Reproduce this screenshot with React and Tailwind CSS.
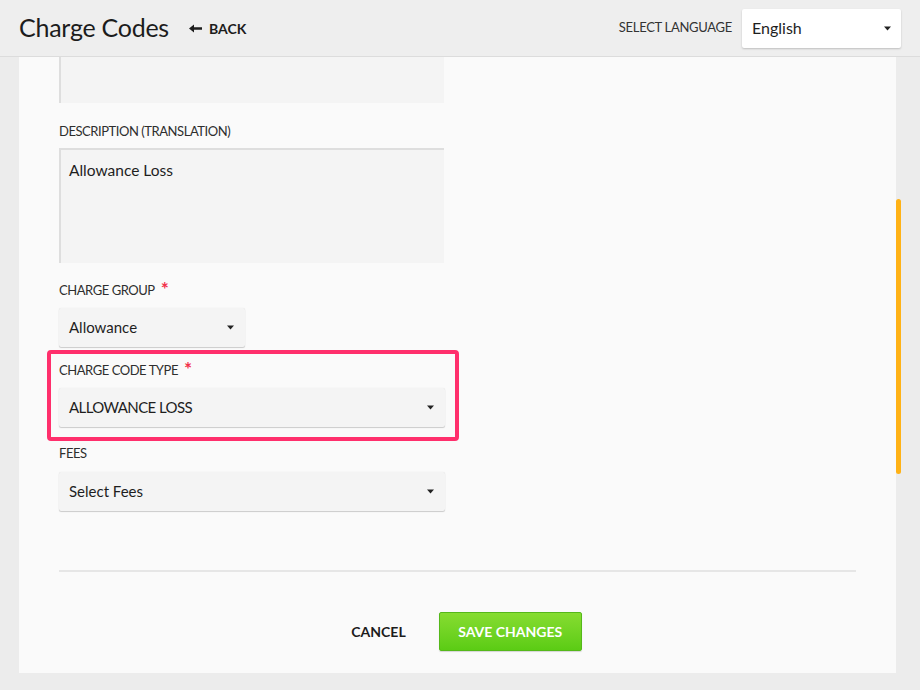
import React from "react";

const font = { fontFamily: '"Source Sans Pro", Lato, "Noto Sans", sans-serif' };

function Caret({ className = "" }) {
  return (
    <svg width="7" height="5" viewBox="0 0 7 5" className={className}>
      <path d="M0 0.5 L7 0.5 L3.5 4.5 Z" fill="#222" />
    </svg>
  );
}

function Select({ value, width = "w-[386px]", textClass = "" }) {
  return (
    <div
      className={`${width} h-[39px] bg-[#f4f4f4] rounded-[2px] shadow-[0_1px_1px_rgba(0,0,0,0.18),0_0_1px_rgba(0,0,0,0.12)] flex items-center justify-between pl-[10px] pr-[11px] text-[15px] text-[#1e1e1e]`}
    >
      <span className={textClass}>{value}</span>
      <Caret />
    </div>
  );
}

function Label({ children, required }) {
  return (
    <div className="text-[13px] leading-[18px] tracking-[-0.45px] text-[#2e2e2e] uppercase flex items-start">
      <span>{children}</span>
      {required && <span className="text-[#f2304a] ml-[6px] text-[19px] font-bold leading-[15px]">*</span>}
    </div>
  );
}

export default function App() {
  return (
    <div style={font} className="w-[920px] h-[690px] bg-[#ececec] flex flex-col overflow-hidden relative">
      <header className="h-[57px] shrink-0 bg-[#eeeeee] border-b border-[#dcdcdc] flex items-center pl-[19px] pr-[19px]">
        <h1 className="text-[25px] tracking-[-0.25px] text-[#1c1c1c] leading-none mt-[-2px]">Charge Codes</h1>
        <div className="ml-[20px] flex items-center gap-[7px] text-[14px] font-bold text-[#1c1c1c]">
          <svg width="13" height="9" viewBox="0 0 13 9">
            <path d="M0 4.5 L5 0.5 L5 3.2 L13 3.2 L13 5.8 L5 5.8 L5 8.5 Z" fill="#1c1c1c" />
          </svg>
          <span>BACK</span>
        </div>
        <div className="ml-auto flex items-center gap-[10px]">
          <span className="text-[13px] tracking-[-0.3px] text-[#333]">SELECT LANGUAGE</span>
          <div className="w-[159px] h-[39px] bg-white rounded-[2px] shadow-[0_1px_2px_rgba(0,0,0,0.2)] flex items-center justify-between pl-[10px] pr-[10px] text-[16px] text-[#1e1e1e]">
            <span>English</span>
            <Caret />
          </div>
        </div>
      </header>

      <main className="ml-[19px] w-[877px] h-[616px] bg-[#fafafa] relative pl-[40px] pr-[40px] flex flex-col">
        <div className="w-[385px] h-[46px] bg-[#f4f4f4] border-l-2 border-[#dedede]" />

        <div className="mt-[19px]">
          <Label>Description (Translation)</Label>
        </div>
        <div className="mt-[8px] w-[385px] h-[115px] bg-[#f4f4f4] border-l-2 border-t-2 border-[#dedede] pt-[9px] pl-[8px] text-[15.5px] text-[#1e1e1e]">
          Allowance Loss
        </div>

        <div className="mt-[18px]">
          <Label required>Charge Group</Label>
        </div>
        <div className="mt-[9px]">
          <Select value="Allowance" width="w-[186px]" />
        </div>

        <div className="mt-[14px]">
          <Label required>Charge Code Type</Label>
        </div>
        <div className="mt-[9px]">
          <Select value="ALLOWANCE LOSS" textClass="tracking-[-0.6px]" />
        </div>

        <div className="mt-[17px]">
          <Label>Fees</Label>
        </div>
        <div className="mt-[10px]">
          <Select value="Select Fees" />
        </div>

        <div className="mt-[59px] h-[2px] bg-[#e6e6e6]" />

        <div className="mt-[40px] flex items-center justify-center gap-[13px] pr-[2px]">
          <button className="px-[20px] h-[39px] text-[14px] font-bold text-[#1c1c1c]">CANCEL</button>
          <button className="w-[143px] h-[39px] rounded-[2px] bg-gradient-to-b from-[#86dc30] to-[#5bcc14] border border-[#55b81a] text-white text-[14px] font-bold shadow-[0_1px_1px_rgba(0,0,0,0.15)]">
            SAVE CHANGES
          </button>
        </div>

        <div className="absolute left-[28px] top-[293px] w-[412px] h-[91px] border-[4px] border-[#ff2f6c] rounded-[4px] pointer-events-none" />
      </main>

      <div className="absolute left-[896px] top-[199px] w-[5px] h-[275px] rounded-full bg-[#ffb216]" />
    </div>
  );
}
